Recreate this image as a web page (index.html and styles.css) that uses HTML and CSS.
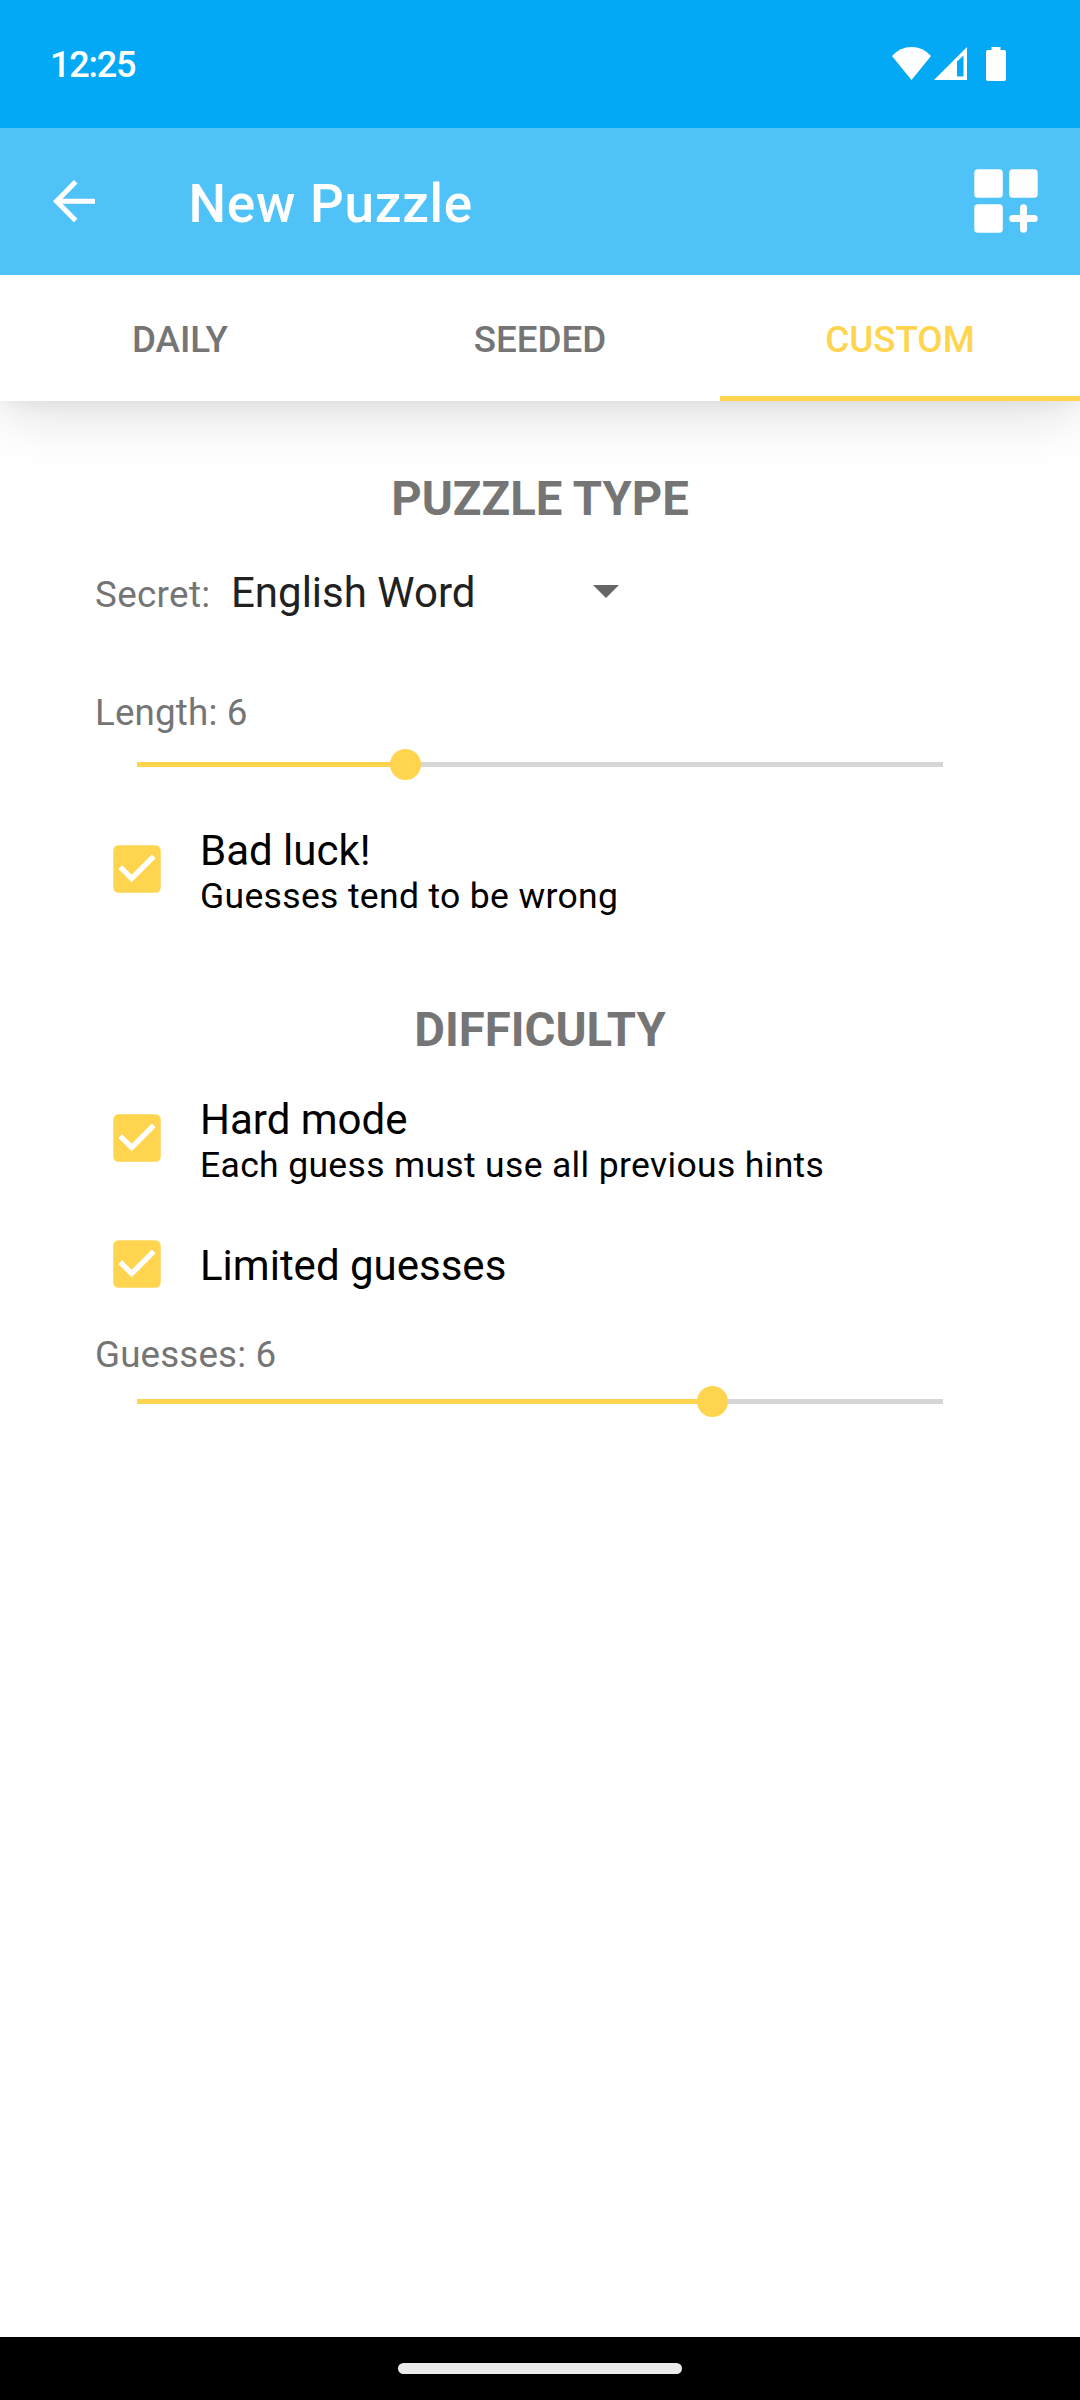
FILE: index.html
```html
<!DOCTYPE html>
<html lang="en">
<head>
<meta charset="utf-8">
<title>New Puzzle</title>
<link rel="stylesheet" href="styles.css">
</head>
<body>
<div class="screen">
  <div class="status-bar">
    <span class="clock">12:25</span>
    <svg class="status-icons" width="116" height="36" viewBox="0 0 116 36" fill="#fff">
      <path d="M0 9 Q8 0 19.500 0 Q31 0 39 9 L19.500 33 Z"/>
      <path fill-rule="evenodd" d="M42 33 L75 0 V33 Z M65 14.500 V29.500 H71.500 V8.500 Z"/>
      <path d="M99.500 0 h9 v3 h3.500 a2 2 0 0 1 2 2 v27 a2 2 0 0 1 -2 2 h-16 a2 2 0 0 1 -2 -2 v-27 a2 2 0 0 1 2 -2 h3.500 z"/>
    </svg>
  </div>
  <header class="app-bar">
    <svg class="back" width="42" height="42" viewBox="0 0 42 42" fill="none" stroke="#fff" stroke-width="5">
      <path d="M42 21.200 H4"/><path d="M22.700 1.800 L3.500 21.200 L22.700 40.600"/>
    </svg>
    <h1 class="title">New Puzzle</h1>
    <svg class="add" width="64" height="64" viewBox="0 0 64 64" fill="#fff">
      <rect x="0.300" y="0.300" width="28.500" height="28.500" rx="3.500"/>
      <rect x="35.200" y="0.300" width="28.500" height="28.500" rx="3.500"/>
      <rect x="0.300" y="35.200" width="28.500" height="28.500" rx="3.500"/>
      <rect x="35.200" y="46" width="28.500" height="7" rx="3.500"/>
      <rect x="46" y="35.200" width="7" height="28.500" rx="3.500"/>
    </svg>
  </header>
  <nav class="tabs">
    <div class="tab">DAILY</div>
    <div class="tab">SEEDED</div>
    <div class="tab active">CUSTOM</div>
  </nav>
  <main class="content">
    <h2 class="heading">PUZZLE TYPE</h2>
    <div class="secret">
      <span class="label">Secret:</span>
      <span class="value">English Word</span>
      <svg class="caret" width="26" height="13" viewBox="0 0 26 13"><path fill="#666" d="M0 0 H26 L13 13 Z"/></svg>
    </div>
    <div class="label length">Length: 6</div>
    <div class="slider"><div class="fill" style="width:268.500px"></div><div class="thumb"></div><div class="rest"></div></div>
    <div class="option luck">
      <svg class="check" width="48" height="48" viewBox="0 0 18 18"><rect x=".1" y=".1" width="17.800" height="17.800" rx="2" fill="#ffd54f"/><path d="M7 14 L2 9 L3.410 7.590 L7 11.170 L14.590 3.580 L16 5 Z" fill="#fff"/></svg>
      <div class="option-text"><div class="name">Bad luck!</div><div class="hint">Guesses tend to be wrong</div></div>
    </div>
    <h2 class="heading difficulty">DIFFICULTY</h2>
    <div class="option hard">
      <svg class="check" width="48" height="48" viewBox="0 0 18 18"><rect x=".1" y=".1" width="17.800" height="17.800" rx="2" fill="#ffd54f"/><path d="M7 14 L2 9 L3.410 7.590 L7 11.170 L14.590 3.580 L16 5 Z" fill="#fff"/></svg>
      <div class="option-text"><div class="name">Hard mode</div><div class="hint">Each guess must use all previous hints</div></div>
    </div>
    <div class="option limited">
      <svg class="check" width="48" height="48" viewBox="0 0 18 18"><rect x=".1" y=".1" width="17.800" height="17.800" rx="2" fill="#ffd54f"/><path d="M7 14 L2 9 L3.410 7.590 L7 11.170 L14.590 3.580 L16 5 Z" fill="#fff"/></svg>
      <div class="option-text"><div class="name">Limited guesses</div></div>
    </div>
    <div class="label guesses">Guesses: 6</div>
    <div class="slider"><div class="fill" style="width:575.500px"></div><div class="thumb"></div><div class="rest"></div></div>
  </main>
  <footer class="nav-bar"><div class="pill"></div></footer>
</div>
</body>
</html>
```
FILE: styles.css
```css
* { box-sizing: border-box; }
body { margin: 0; background: #fff; font-family: Roboto, sans-serif; }
h1, h2 { margin: 0; }
svg { display: block; flex: none; }
.screen { width: 1080px; height: 2400px; display: flex; flex-direction: column; overflow: hidden; }

.status-bar { height: 128px; background: #03a9f4; display: flex; justify-content: space-between; padding: 47px 72px 0 50px; }
.clock { color: #fff; font-size: 36px; font-weight: 500; line-height: 36px; letter-spacing: -1.2px; }

.app-bar { position: relative; z-index: 1; height: 147px; background: #4fc3f7; display: flex; align-items: flex-start; padding: 41px 42px 0 52.5px; }
.back { margin-top: 11px; }
.title { margin: 5px auto 0 94px; color: #fff; font-size: 53px; line-height: 60px; font-weight: 500; letter-spacing: 0.75px; }

.tabs { height: 126px; flex: none; display: flex; background: #fff; position: relative; box-shadow: 0 3px 16px rgba(0,0,0,.05), 0 20px 56px -4px rgba(0,0,0,.12); }
.tab { flex: 1; border-bottom: 5px solid transparent; padding-top: 4px; text-align: center; color: #757575; font-size: 36.75px; font-weight: 500; line-height: 121px; }
.tab.active { color: #ffd54f; border-bottom-color: #ffd54f; }

.content { flex: 1; padding: 70px 95px 0; }
.heading { color: #757575; font-size: 47.25px; line-height: 56px; font-weight: 700; text-align: center; }
.label { color: #757575; font-size: 36.75px; line-height: 44px; letter-spacing: 0.15px; }
.secret { display: flex; align-items: baseline; height: 56px; margin-top: 38px; }
.secret .label { width: 136px; letter-spacing: 0.35px; }
.value { width: 361.5px; color: #212121; font-size: 42px; line-height: 56px; }
.caret { align-self: flex-start; margin-top: 20px; }
.length { margin-top: 70px; }

.slider { display: flex; align-items: center; height: 31px; margin: 14px 42px 0; }
.fill { height: 5px; background: #ffd54f; margin-right: -15.5px; }
.thumb { width: 31px; height: 31px; border-radius: 50%; background: #ffd54f; position: relative; z-index: 1; }
.rest { flex: 1; height: 5px; background: #d6d6d6; margin-left: -15.5px; }

.option { display: flex; gap: 39px; padding-left: 18px; color: #000; }
.check { margin-top: 19px; }
.name { font-size: 42px; line-height: 49px; }
.hint { font-size: 35.5px; line-height: 43px; letter-spacing: 0.34px; }
.luck { margin-top: 46px; }
.difficulty { margin-top: 84px; }
.hard { margin-top: 37px; }
.limited { margin-top: 54px; }
.limited .check { margin-top: -1px; }
.guesses { margin-top: 43px; }
.guesses + .slider { margin-top: 9px; }

.nav-bar { height: 63px; background: #000; padding-top: 26px; }
.pill { width: 284px; height: 11px; margin: 0 auto; border-radius: 6px; background: #ebebeb; }
```
